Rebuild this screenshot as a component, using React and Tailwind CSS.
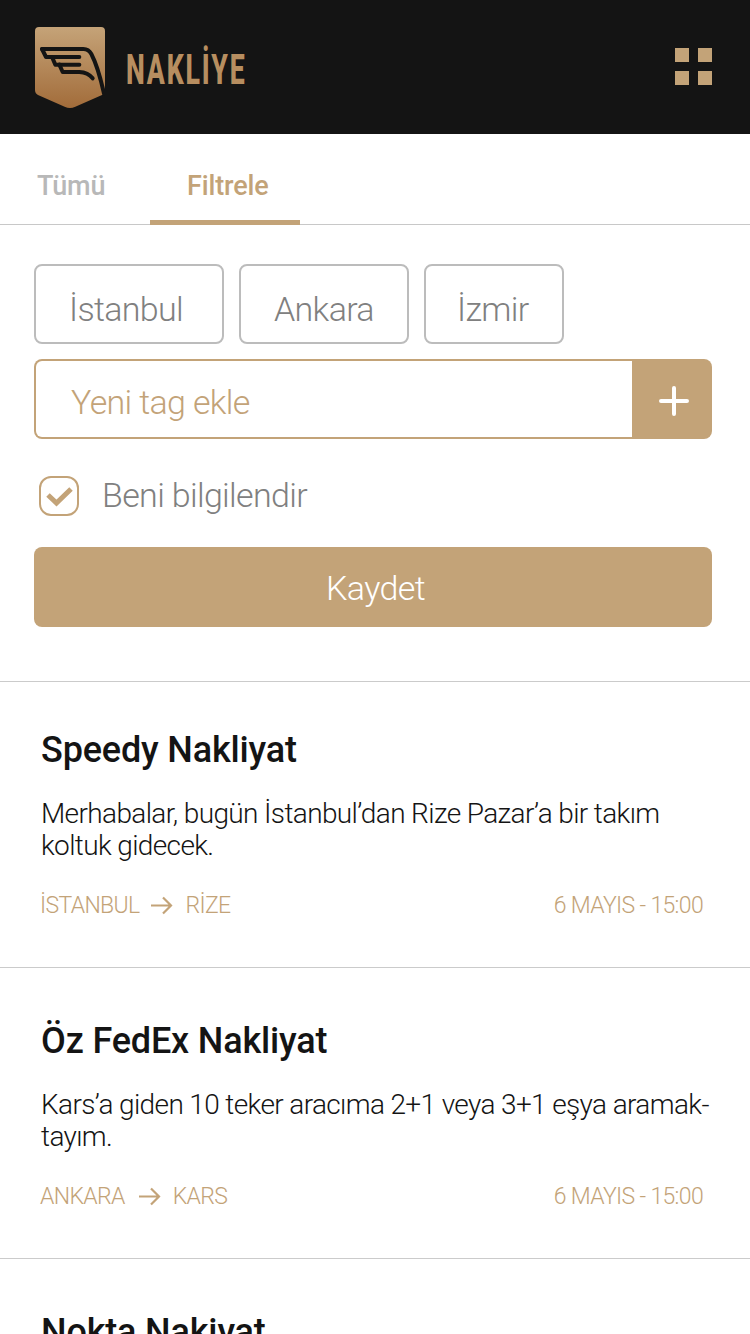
import { useState } from 'react';

const tags = [
  { id: 1, label: 'İstanbul', width: 'w-[190px]', indent: 'pl-[33px]' },
  { id: 2, label: 'Ankara', width: 'w-[170px]', indent: 'pl-[33px]' },
  { id: 3, label: 'İzmir', width: 'w-[140px]', indent: 'pl-[31px]' },
];

const listings = [
  {
    id: 1,
    company: 'Speedy Nakliyat',
    lines: ['Merhabalar, bugün İstanbul’dan Rize Pazar’a bir takım', 'koltuk gidecek.'],
    from: 'İSTANBUL',
    to: 'RİZE',
    date: '6 MAYIS - 15:00',
    arrow: 'ml-[11px] mr-[13px]',
  },
  {
    id: 2,
    company: 'Öz FedEx Nakliyat',
    lines: ['Kars’a giden 10 teker aracıma 2+1 veya 3+1 eşya aramak-', 'tayım.'],
    from: 'ANKARA',
    to: 'KARS',
    date: '6 MAYIS - 15:00',
    arrow: 'ml-[14px] mr-[12px]',
  },
  {
    id: 3,
    company: 'Nokta Nakiyat',
    lines: [],
  },
];

const Logo = () => (
  <svg width="70" height="81" viewBox="45 36 210 243" fill="none">
    <defs>
      <linearGradient id="shield" x1="0" y1="0" x2="0" y2="1">
        <stop offset="0" stopColor="#c5a378" />
        <stop offset="1" stopColor="#a26c3a" />
      </linearGradient>
    </defs>
    <path d="M57 36H243Q255 36 255 48V225Q255 235 246 240L166 275Q150 283 134 275L54 240Q45 235 45 225V48Q45 36 57 36Z" fill="url(#shield)" />
    <g stroke="#141414" strokeWidth="12" strokeLinecap="round" strokeLinejoin="round">
      <path d="M66 102H190Q206 102 214 117Q234 155 252 236" />
      <path d="M66 102L78 126H178" />
      <path d="M96 126L106 149H178" />
      <path d="M118 149L128 171H178Q204 172 218 190" />
    </g>
  </svg>
);

const Arrow = () => (
  <svg width="22" height="20" viewBox="0 0 22 20" fill="none" stroke="#c3a378" strokeWidth="2.2">
    <path d="M0 9.500H20M12 1.500L20 9.500L12 17.500" />
  </svg>
);

const App = () => {
  const [notify, setNotify] = useState(true);

  return (
    <div className="w-[750px] h-[1334px] overflow-hidden bg-white font-[Roboto,sans-serif]">
      <header className="h-[134px] bg-[#141414] flex items-start justify-between pl-[35px] pr-[38px]">
        <div className="flex items-start pt-[27px]">
          <Logo />
          <span className="ml-[21px] mt-[19px] w-[120px] h-[48px] leading-[48px] text-[42px] font-extrabold tracking-[2.9px] text-[#b78e60] origin-left scale-x-[0.635] whitespace-nowrap">NAKLİYE</span>
        </div>
        <button className="mt-12 grid grid-cols-2 gap-[9px]">
          <span className="size-[14px] bg-[#c3a378]" />
          <span className="size-[14px] bg-[#c3a378]" />
          <span className="size-[14px] bg-[#c3a378]" />
          <span className="size-[14px] bg-[#c3a378]" />
        </button>
      </header>

      {/* Tabs */}
      <nav className="h-[91px] flex border-b border-[#c8c8c8] text-[27px] font-medium tracking-[-0.15px]">
        <button className="w-[150px] h-[91px] pl-[37px] pb-[7px] pt-5 leading-[64px] text-left text-[#b8b8b8]">Tümü</button>
        <button className="w-[150px] h-[91px] pl-[37px] pt-[18px] leading-[64px] text-left text-[#c3a378] border-b-[5px] border-[#c3a378]">Filtrele</button>
      </nav>

      {/* Filter form */}
      <form className="h-[456px] pt-[39px] pl-[34px] pr-[38px] text-[34px] font-light tracking-[-0.66px]">
        <div className="flex gap-[15px]">
          {tags.map((tag) => (
            <span key={tag.id} className={`${tag.width} ${tag.indent} h-20 rounded-lg border-2 border-[#bcbcbc] pt-[8px] leading-[70px] text-[#808080]`}>
              {tag.label}
            </span>
          ))}
        </div>

        <div className="mt-[15px] h-20 flex rounded-lg overflow-hidden bg-[#c3a378]">
          <span className="flex-1 my-[2px] ml-[2px] rounded-l-[6px] bg-white pl-[35px] pt-[5px] leading-[72px] text-[#c3a378]">Yeni tag ekle</span>
          <button type="button" className="w-20 pl-1 pt-1 flex items-center justify-center">
            <svg width="30" height="30" viewBox="0 0 30 30" stroke="white" strokeWidth="4" strokeLinecap="round">
              <path d="M15 2V28M2 15H28" />
            </svg>
          </button>
        </div>

        <div className="mt-[37px] ml-[5px] h-10 flex items-center gap-[23px]" onClick={() => setNotify(!notify)}>
          <span className="size-10 rounded-xl border-2 border-[#c3a378] flex items-center justify-center">
            {notify && (
              <svg width="28" height="22" viewBox="0 0 28 22" fill="none" stroke="#c3a378" strokeWidth="5">
                <path d="M3 10L11.500 18L26 4" />
              </svg>
            )}
          </span>
          <span className="leading-10 pb-[2px] text-[#808080]">Beni bilgilendir</span>
        </div>

        <button type="button" className="mt-[31px] w-full h-20 rounded-lg bg-[#c3a378] text-white pt-[3px] pl-[5px]">Kaydet</button>
      </form>

      {/* Listings */}
      {listings.map((item) => (
        <article key={item.id} className="h-[291px] first-of-type:h-[286px] pt-[52px] first-of-type:pt-[47px] pl-[41px] pr-[46px] border-t border-[#cbcbcb]">
          <h2 className="text-[36px] leading-[42px] font-medium tracking-[-0.16px] text-[#141414]">{item.company}</h2>
          <p className="mt-[27px] h-16 text-[28px] leading-8 font-light tracking-[-0.63px] text-[#141414] whitespace-nowrap">
            {item.lines.map((line) => (
              <span key={line} className="block">{line}</span>
            ))}
          </p>
          {item.from && (
            <div className="mt-[29px] -ml-px pr-px flex items-center text-[23px] leading-7 font-light tracking-[-0.65px] text-[#c3a378]">
              <span className="pt-px">{item.from}</span>
              <span className={item.arrow}><Arrow /></span>
              <span className="pt-px">{item.to}</span>
              <span className="ml-auto pt-px">{item.date}</span>
            </div>
          )}
        </article>
      ))}
    </div>
  );
};

export default App;
